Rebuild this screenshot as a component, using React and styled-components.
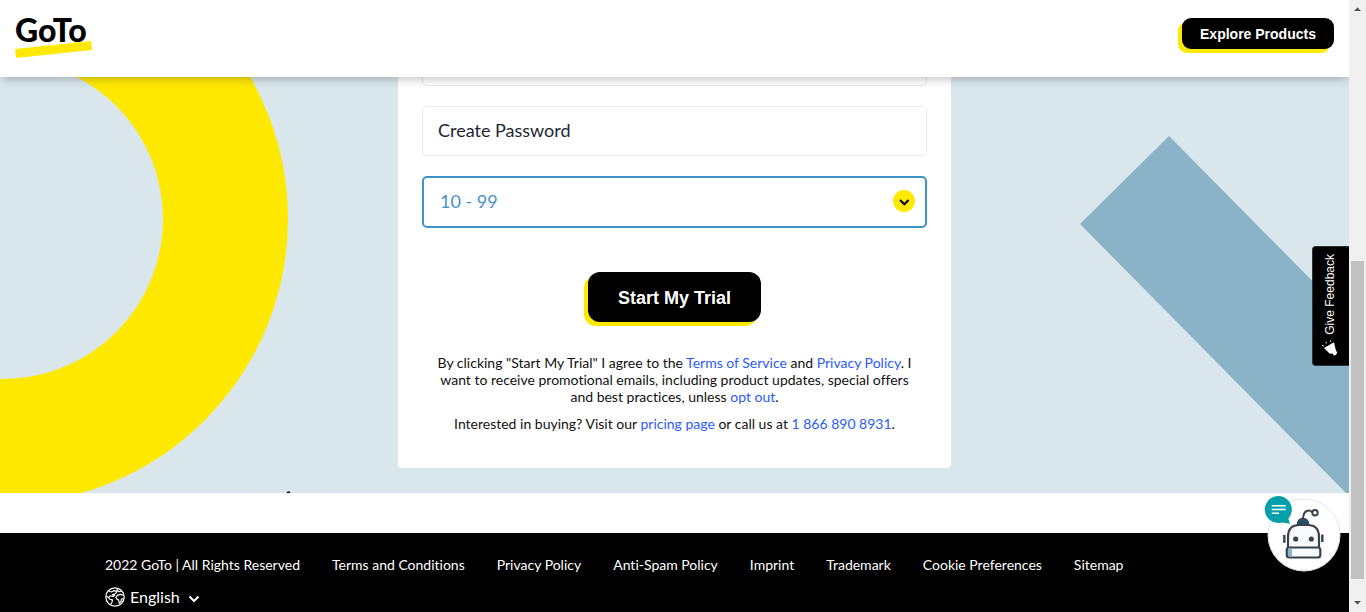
import React from "react";
import styled, { createGlobalStyle } from "styled-components";

const sans = `Lato, "Liberation Sans", sans-serif`;
const grotesk = `"Liberation Sans", Arial, sans-serif`;
const yellow = "#ffe900";
const blue = "#3e93ca";

const GlobalStyle = createGlobalStyle`
  *, *::before, *::after { box-sizing: border-box; }
  body {
    margin: 0;
    background: #fff;
    color: #111;
    font-family: ${sans};
    font-variant-ligatures: none;
  }
`;

const Shell = styled.div`
  display: grid;
  grid-template-columns: minmax(0, 1fr) 17px;
  height: 100vh;
  overflow: hidden;
`;

const Page = styled.div`
  position: relative;
  display: flex;
  flex-direction: column;
  min-height: 0;
  overflow: hidden;
`;

const Header = styled.header`
  position: relative;
  z-index: 2;
  flex: none;
  display: flex;
  justify-content: space-between;
  align-items: center;
  padding: 0 15px 10px;
  background: #fff;
  box-shadow: 0 3px 10px -2px rgba(0, 0, 0, 0.3);
`;

const LogoLink = styled.a`
  display: block;
  line-height: 0;
`;

const PrimaryButton = styled.button`
  border: 0;
  background: #000;
  color: #fff;
  font-family: ${grotesk};
  font-weight: 700;
  font-size: ${(p) => (p.$large ? 18 : 14)}px;
  line-height: 20px;
  width: ${(p) => (p.$large ? 173 : 152)}px;
  height: ${(p) => (p.$large ? 50 : 31)}px;
  padding: ${(p) => (p.$large ? 2 : 0)}px 0 0;
  border-radius: ${(p) => (p.$large ? 12 : 9)}px;
  box-shadow: -4px 4px 0 ${yellow};
  cursor: pointer;
`;

const Hero = styled.main`
  position: relative;
  flex: none;
  display: flex;
  justify-content: center;
  background: #d9e6eb;
  overflow: hidden;
`;

const Decoration = styled.svg`
  position: absolute;
  top: 0;
  ${(p) => p.$side}: 0;
`;

const Card = styled.form`
  position: relative;
  display: flex;
  flex-direction: column;
  align-items: center;
  width: 553px;
  margin: -41px 0 25px;
  padding: 0 24px 36px;
  background: #fff;
  border-radius: 4px;
`;

const Fields = styled.div`
  align-self: stretch;
  display: flex;
  flex-direction: column;
  gap: 20px;
  margin-bottom: 44px;
`;

const Field = styled.input`
  width: 100%;
  height: 50px;
  padding: 0 15px 2px;
  border: 1px solid #ebebeb;
  border-radius: 5px;
  background: #fff;
  font-family: ${sans};
  font-size: 18px;
  color: #1d2733;
  outline: none;
  &::placeholder { color: #1d2733; opacity: 1; }
`;

const SelectWrap = styled.div`
  position: relative;
`;

const Select = styled.select`
  display: block;
  appearance: none;
  width: 100%;
  height: 52px;
  padding: 0 48px 2px 16px;
  border: 2px solid ${blue};
  border-radius: 5px;
  background: #fff;
  font-family: ${sans};
  font-size: 18px;
  color: #4a90c8;
  outline: none;
`;

const SelectArrow = styled.svg`
  position: absolute;
  top: 14px;
  right: 12px;
  pointer-events: none;
`;

const Legal = styled.p`
  margin: ${(p) => p.$top}px 0 0;
  font-size: 14px;
  line-height: 17px;
  text-align: center;
  white-space: nowrap;
`;

const TextLink = styled.a`
  color: #2a5bff;
  text-decoration: none;
`;

const Footer = styled.footer`
  flex: 1;
  margin-top: 40px;
  padding: 22px 105px 0;
  background: #000;
  color: #fff;
`;

const FooterLinks = styled.nav`
  display: flex;
  gap: 32px;
  font-size: 14px;
  line-height: 20px;
  white-space: nowrap;
`;

const FooterLink = styled.a`
  color: #fff;
  text-decoration: none;
`;

const Language = styled.button`
  display: flex;
  align-items: center;
  gap: 5px;
  margin-top: 12px;
  padding: 0;
  border: 0;
  background: none;
  color: #fff;
  font-family: ${sans};
  font-size: 16px;
  line-height: 20px;
  cursor: pointer;
`;

const FeedbackTab = styled.button`
  position: absolute;
  z-index: 3;
  right: 0;
  top: 246px;
  display: flex;
  flex-direction: column;
  align-items: center;
  justify-content: flex-end;
  gap: 4px;
  width: 37px;
  height: 120px;
  padding: 0 2px 8px 0;
  border: 1px solid #2b333a;
  border-right: 0;
  border-radius: 4px 0 0 4px;
  background: #000;
  color: #fff;
  font-family: ${grotesk};
  font-size: 12px;
  line-height: 16px;
  cursor: pointer;
`;

const VerticalText = styled.span`
  writing-mode: vertical-rl;
  transform: rotate(180deg);
  white-space: nowrap;
`;

const ChatButton = styled.button`
  position: absolute;
  z-index: 3;
  right: 8px;
  bottom: 39px;
  padding: 0;
  border: 0;
  background: none;
  line-height: 0;
  cursor: pointer;
`;

const ScrollTrack = styled.div`
  display: flex;
  flex-direction: column;
  align-items: center;
  background: #f0f0f0;
`;

const ScrollThumb = styled.div`
  width: 13px;
  height: 52%;
  margin-top: auto;
  background: #c1c1c1;
`;

const ScrollArrow = styled.svg`
  flex: none;
  margin: ${(p) => (p.$down ? "16px 0 0" : "0")};
`;

function Logo() {
  return (
    <LogoLink href="#" aria-label="GoTo home">
      <svg width="78" height="67" viewBox="0 -18 78 67">
        <polygon points="0,31 76,23 77,32 1,40" fill={yellow} />
        <text x="0" y="24" fontFamily="Lato, sans-serif" fontWeight="900" fontSize="32" fill="#000">
          GoTo
        </text>
      </svg>
    </LogoLink>
  );
}

function Globe() {
  return (
    <svg width="20" height="20" viewBox="0 0 20 20" fill="none" stroke="#fff" strokeWidth="1.2" strokeLinejoin="round">
      <circle cx="10" cy="10" r="9.2" />
      <path d="M4 4.2 6.5 5 9 3.6 12 4.6 10.2 6.8 7.4 7.6 9.6 8.6 8 9.6 5.4 8.8 3.4 10.6 5.2 12.4 7.6 12.8 7 15.2 5.8 17.4M1.4 9 3.4 10.6" />
      <path d="M13 1.6 11.8 3.4 14.4 4.6 17 4.2M18.8 8.4 15.6 7.4 12.6 8.2 10.8 10.6 12.2 12.4 13.6 12.8 14.2 16.2 16 14.6 16.4 12.2 18.6 11.4" />
    </svg>
  );
}

function Megaphone() {
  return (
    <svg width="18" height="18" viewBox="0 0 18 18">
      <path d="M3 9 13 3.2 14.8 11 16.2 13.6 15 16 12.6 16.6 11.6 14.4 8.8 14.8Z" fill="#fff" />
      <path d="M1 6.2 2.8 7.2M4.8 2.8 5.6 4.4M9.6 1.4 9.8 3" stroke="#fff" strokeWidth="1" />
    </svg>
  );
}

function Robot() {
  return (
    <svg width="77" height="77" viewBox="0 0 77 77" fill="none">
      <circle cx="40" cy="39" r="36" fill="#fff" stroke="#e3e6e8" strokeWidth="1" />
      <path d="M39 22C39.500 17 42 14.600 45 14.600 46.600 14.600 47.400 15.400 48.400 16.200" stroke="#3a414c" strokeWidth="2" />
      <circle cx="51" cy="16.700" r="2.700" stroke="#3a414c" strokeWidth="2" />
      <path d="M33.500 28.500Q34 22.500 39 22.500T44.500 28.500Z" fill="#1d5270" stroke="#3a414c" strokeWidth="1.600" />
      <path d="M24 52V41Q24 29 35.500 29H43.500Q55 29 55 41V52Z" fill="#f7f9fc" stroke="#3a414c" strokeWidth="2.200" />
      <rect x="22.800" y="51.500" width="33.500" height="10" rx="2.500" fill="#f7f9fc" stroke="#3a414c" strokeWidth="2.200" />
      <path d="M24 52.600H28V60.400H25Q24 60.400 24 59.400Z" fill="#8bb3c8" />
      <circle cx="31.700" cy="43" r="2.600" fill="#3a414c" />
      <circle cx="47.300" cy="43" r="2.600" fill="#3a414c" />
      <path d="M20.300 39V46.700M58.300 38.400V46" stroke="#3a414c" strokeWidth="2.400" />
      <circle cx="14.300" cy="13.500" r="13.500" fill="#049fa8" />
      <path d="M16 26 26 27.700 23.500 20Z" fill="#049fa8" />
      <path d="M7.700 9.700H21.700M7.700 13.400H21.700M7.700 17.300H15" stroke="#fff" strokeWidth="1.500" />
    </svg>
  );
}

const footerLinks = [
  "Terms and Conditions",
  "Privacy Policy",
  "Anti-Spam Policy",
  "Imprint",
  "Trademark",
  "Cookie Preferences",
  "Sitemap",
];

export default function App() {
  return (
    <>
      <GlobalStyle />
      <Shell>
        <Page>
          <Header>
            <Logo />
            <PrimaryButton type="button">Explore Products</PrimaryButton>
          </Header>

          <Hero>
            <Decoration $side="left" width="292" height="416" viewBox="0 0 292 416" aria-hidden="true">
              <circle cx="3" cy="142" r="222.500" fill="none" stroke={yellow} strokeWidth="125" />
              <circle cx="288.500" cy="416" r="1.800" fill="#000" />
            </Decoration>
            <Decoration $side="right" width="269" height="416" viewBox="0 0 269 416" aria-hidden="true">
              <polygon points="89,59 0,147 266,416 269,416 269,241" fill="#8bb3c8" />
            </Decoration>

            <Card onSubmit={(e) => e.preventDefault()}>
              <Fields>
                <Field type="text" aria-label="Job title" />
                <Field type="password" placeholder="Create Password" aria-label="Create Password" />
                <SelectWrap>
                  <Select aria-label="Company size" defaultValue="10 - 99">
                    <option>10 - 99</option>
                  </Select>
                  <SelectArrow width="22" height="22" viewBox="0 0 22 22">
                    <circle cx="11" cy="11" r="11" fill={yellow} />
                    <path d="M7 10 11.300 14.300 15.600 10" fill="none" stroke="#000" strokeWidth="2" />
                  </SelectArrow>
                </SelectWrap>
              </Fields>
              <PrimaryButton $large type="submit">Start My Trial</PrimaryButton>
              <Legal $top={32}>
                By clicking "Start My Trial" I agree to the <TextLink href="#">Terms of Service</TextLink> and{" "}
                <TextLink href="#">Privacy Policy</TextLink>. I<br />
                want to receive promotional emails, including product updates, special offers<br />
                and best practices, unless <TextLink href="#">opt out</TextLink>.
              </Legal>
              <Legal $top={10}>
                Interested in buying? Visit our <TextLink href="#">pricing page</TextLink> or call us at{" "}
                <TextLink href="tel:18668908931">1 866 890 8931</TextLink>.
              </Legal>
            </Card>
          </Hero>

          <Footer>
            <FooterLinks>
              <span>2022 GoTo | All Rights Reserved</span>
              {footerLinks.map((label) => (
                <FooterLink href="#" key={label}>{label}</FooterLink>
              ))}
            </FooterLinks>
            <Language type="button">
              <Globe />
              English
              <svg width="18" height="20" viewBox="0 0 18 20" fill="none">
                <path d="M4.500 9.500 9 14 13.500 9.500" stroke="#fff" strokeWidth="2" />
              </svg>
            </Language>
          </Footer>

          <FeedbackTab type="button">
            <VerticalText>Give Feedback</VerticalText>
            <Megaphone />
          </FeedbackTab>
          <ChatButton type="button" aria-label="Open chat">
            <Robot />
          </ChatButton>
        </Page>

        <ScrollTrack aria-hidden="true">
          <ScrollArrow width="17" height="17" viewBox="0 0 17 17">
            <path d="M5 11 8.500 7.500 12 11Z" fill="#505050" />
          </ScrollArrow>
          <ScrollThumb />
          <ScrollArrow $down width="17" height="17" viewBox="0 0 17 17">
            <path d="M5 6 8.500 9.500 12 6Z" fill="#505050" />
          </ScrollArrow>
        </ScrollTrack>
      </Shell>
    </>
  );
}
